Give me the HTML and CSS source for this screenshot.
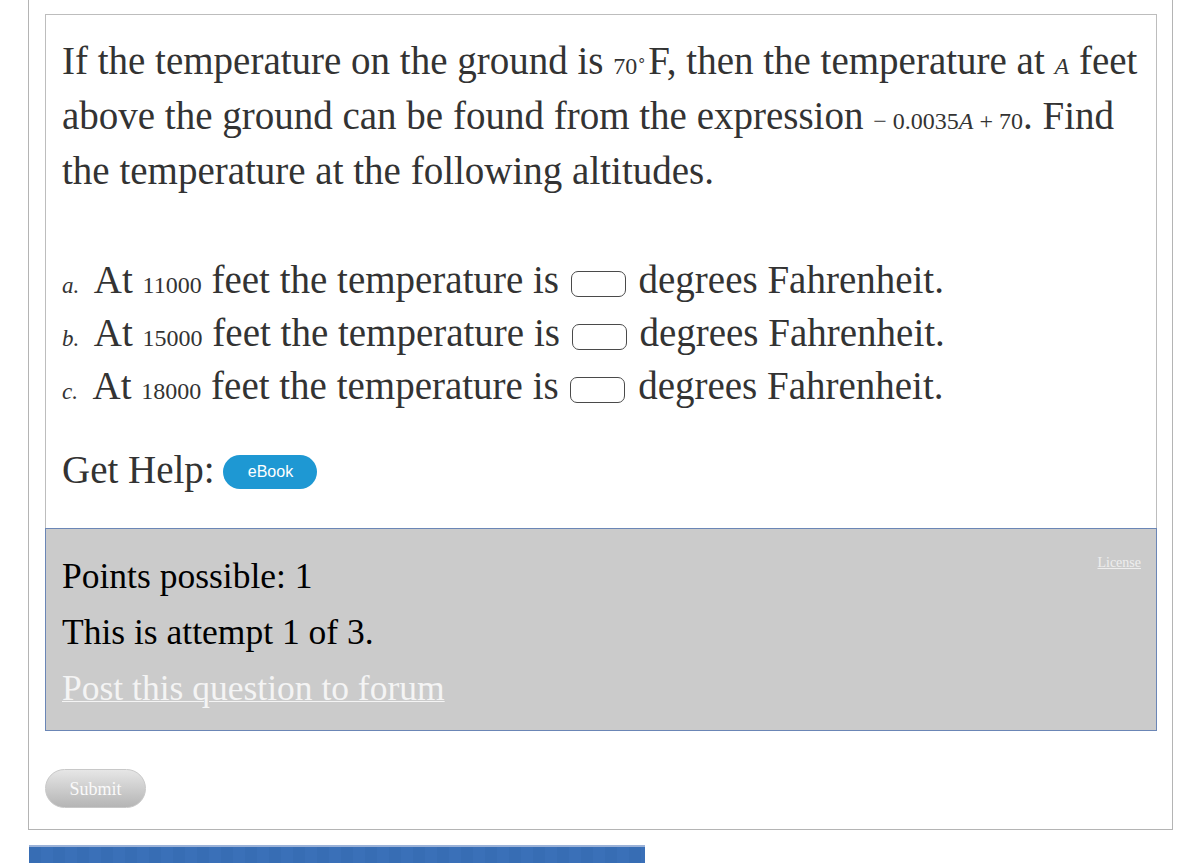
FILE: index.html
```html
<!DOCTYPE html>
<html>
<head>
<meta charset="utf-8">
<link rel="stylesheet" href="styles.css">
</head>
<body>
<div class="outer">
  <div class="question">
    <p class="intro">If the temperature on the ground is <span class="m">70<sup class="deg">∘</sup></span>F, then the temperature at <span class="m mi">A</span> feet<br>above the ground can be found from the expression <span class="m">− 0.0035<i>A</i> + 70</span>. Find<br>the temperature at the following altitudes.</p>
    <div class="parts">
      <div class="row"><span class="lbl">a.</span> At <span class="m">11000</span> feet the temperature is <span class="box"></span> degrees Fahrenheit.</div>
      <div class="row"><span class="lbl">b.</span> At <span class="m">15000</span> feet the temperature is <span class="box"></span> degrees Fahrenheit.</div>
      <div class="row"><span class="lbl">c.</span> At <span class="m">18000</span> feet the temperature is <span class="box"></span> degrees Fahrenheit.</div>
    </div>
    <div class="help">Get Help: <span class="ebook">eBook</span></div>
  </div>
  <div class="results">
    <a class="license" href="#">License</a>
    <div class="line">Points possible: 1</div>
    <div class="line">This is attempt 1 of 3.</div>
    <div class="line"><a class="forum" href="#">Post this question to forum</a></div>
  </div>
  <div class="actions"><span class="submit">Submit</span></div>
</div>
<div class="bluebar"></div>
</body>
</html>
```

FILE: styles.css
```css
html, body {
  margin: 0;
  padding: 0;
  background: #fff;
}
body {
  font-family: "Liberation Serif", "Times New Roman", serif;
  color: #333;
}
.outer {
  margin-left: 28px;
  width: 1145px;
  box-sizing: border-box;
  border: 1px solid #b4b4b4;
  border-top: none;
  padding: 14px 15px 21px 16px;
}
.question {
  border: 1px solid #bdbdbd;
  border-bottom: none;
  padding: 18px 16px 31px 16px;
  font-size: 39px;
}
.intro {
  margin: 0;
  line-height: 55px;
  height: 165px;
  white-space: nowrap;
}
.m {
  font-size: 24px;
  line-height: 1;
}
.mi {
  font-style: italic;
}
.deg {
  font-size: 15px;
  vertical-align: 9px;
  line-height: 0;
  margin-right: 2px;
}
.parts {
  margin-top: 55px;
}
.row {
  line-height: 53px;
  height: 53px;
  white-space: nowrap;
}
.lbl {
  font-size: 23px;
  font-style: italic;
  line-height: 1;
  margin-right: 7px;
}
.box {
  display: inline-block;
  width: 53px;
  height: 24px;
  border: 1.5px solid #4a4a4a;
  border-radius: 7px;
  vertical-align: -4px;
  margin: 0 3px 0 2px;
}
.help {
  margin-top: 30px;
  line-height: 55px;
  height: 55px;
}
.ebook {
  display: inline-block;
  vertical-align: 6px;
  margin-left: -1px;
  width: 94px;
  height: 34px;
  line-height: 34px;
  border-radius: 17px;
  background: #1e98d3;
  color: #fff;
  font-family: "Liberation Sans", Arial, sans-serif;
  font-size: 16px;
  text-align: center;
}
.results {
  position: relative;
  background: #cbcbcb;
  border: 1px solid #6b86b6;
  padding: 19px 16px 14px 16px;
  color: #000;
  font-size: 35.5px;
}
.line {
  line-height: 56px;
  height: 56px;
}
.forum {
  color: #f4f4f4;
  text-decoration: underline;
  text-decoration-thickness: 1px;
}
.license {
  position: absolute;
  right: 15px;
  top: 26px;
  font-size: 14px;
  color: #eeeeee;
  text-decoration: underline;
}
.actions {
  margin-top: 38px;
}
.submit {
  display: inline-block;
  width: 101px;
  height: 39px;
  line-height: 39px;
  border-radius: 20px;
  text-align: center;
  color: #fafafa;
  font-size: 18px;
  background: linear-gradient(#e6e6e6, #b5b5b5);
  border: 1px solid #c8c8c8;
  box-sizing: border-box;
}
.bluebar {
  margin: 15px 0 0 29px;
  width: 616px;
  height: 40px;
  background: repeating-linear-gradient(90deg, #376db4 0, #376db4 12px, #3a70b8 12px, #3a70b8 24px);
  border-top: 2px solid #9bb2d8;
}
```
